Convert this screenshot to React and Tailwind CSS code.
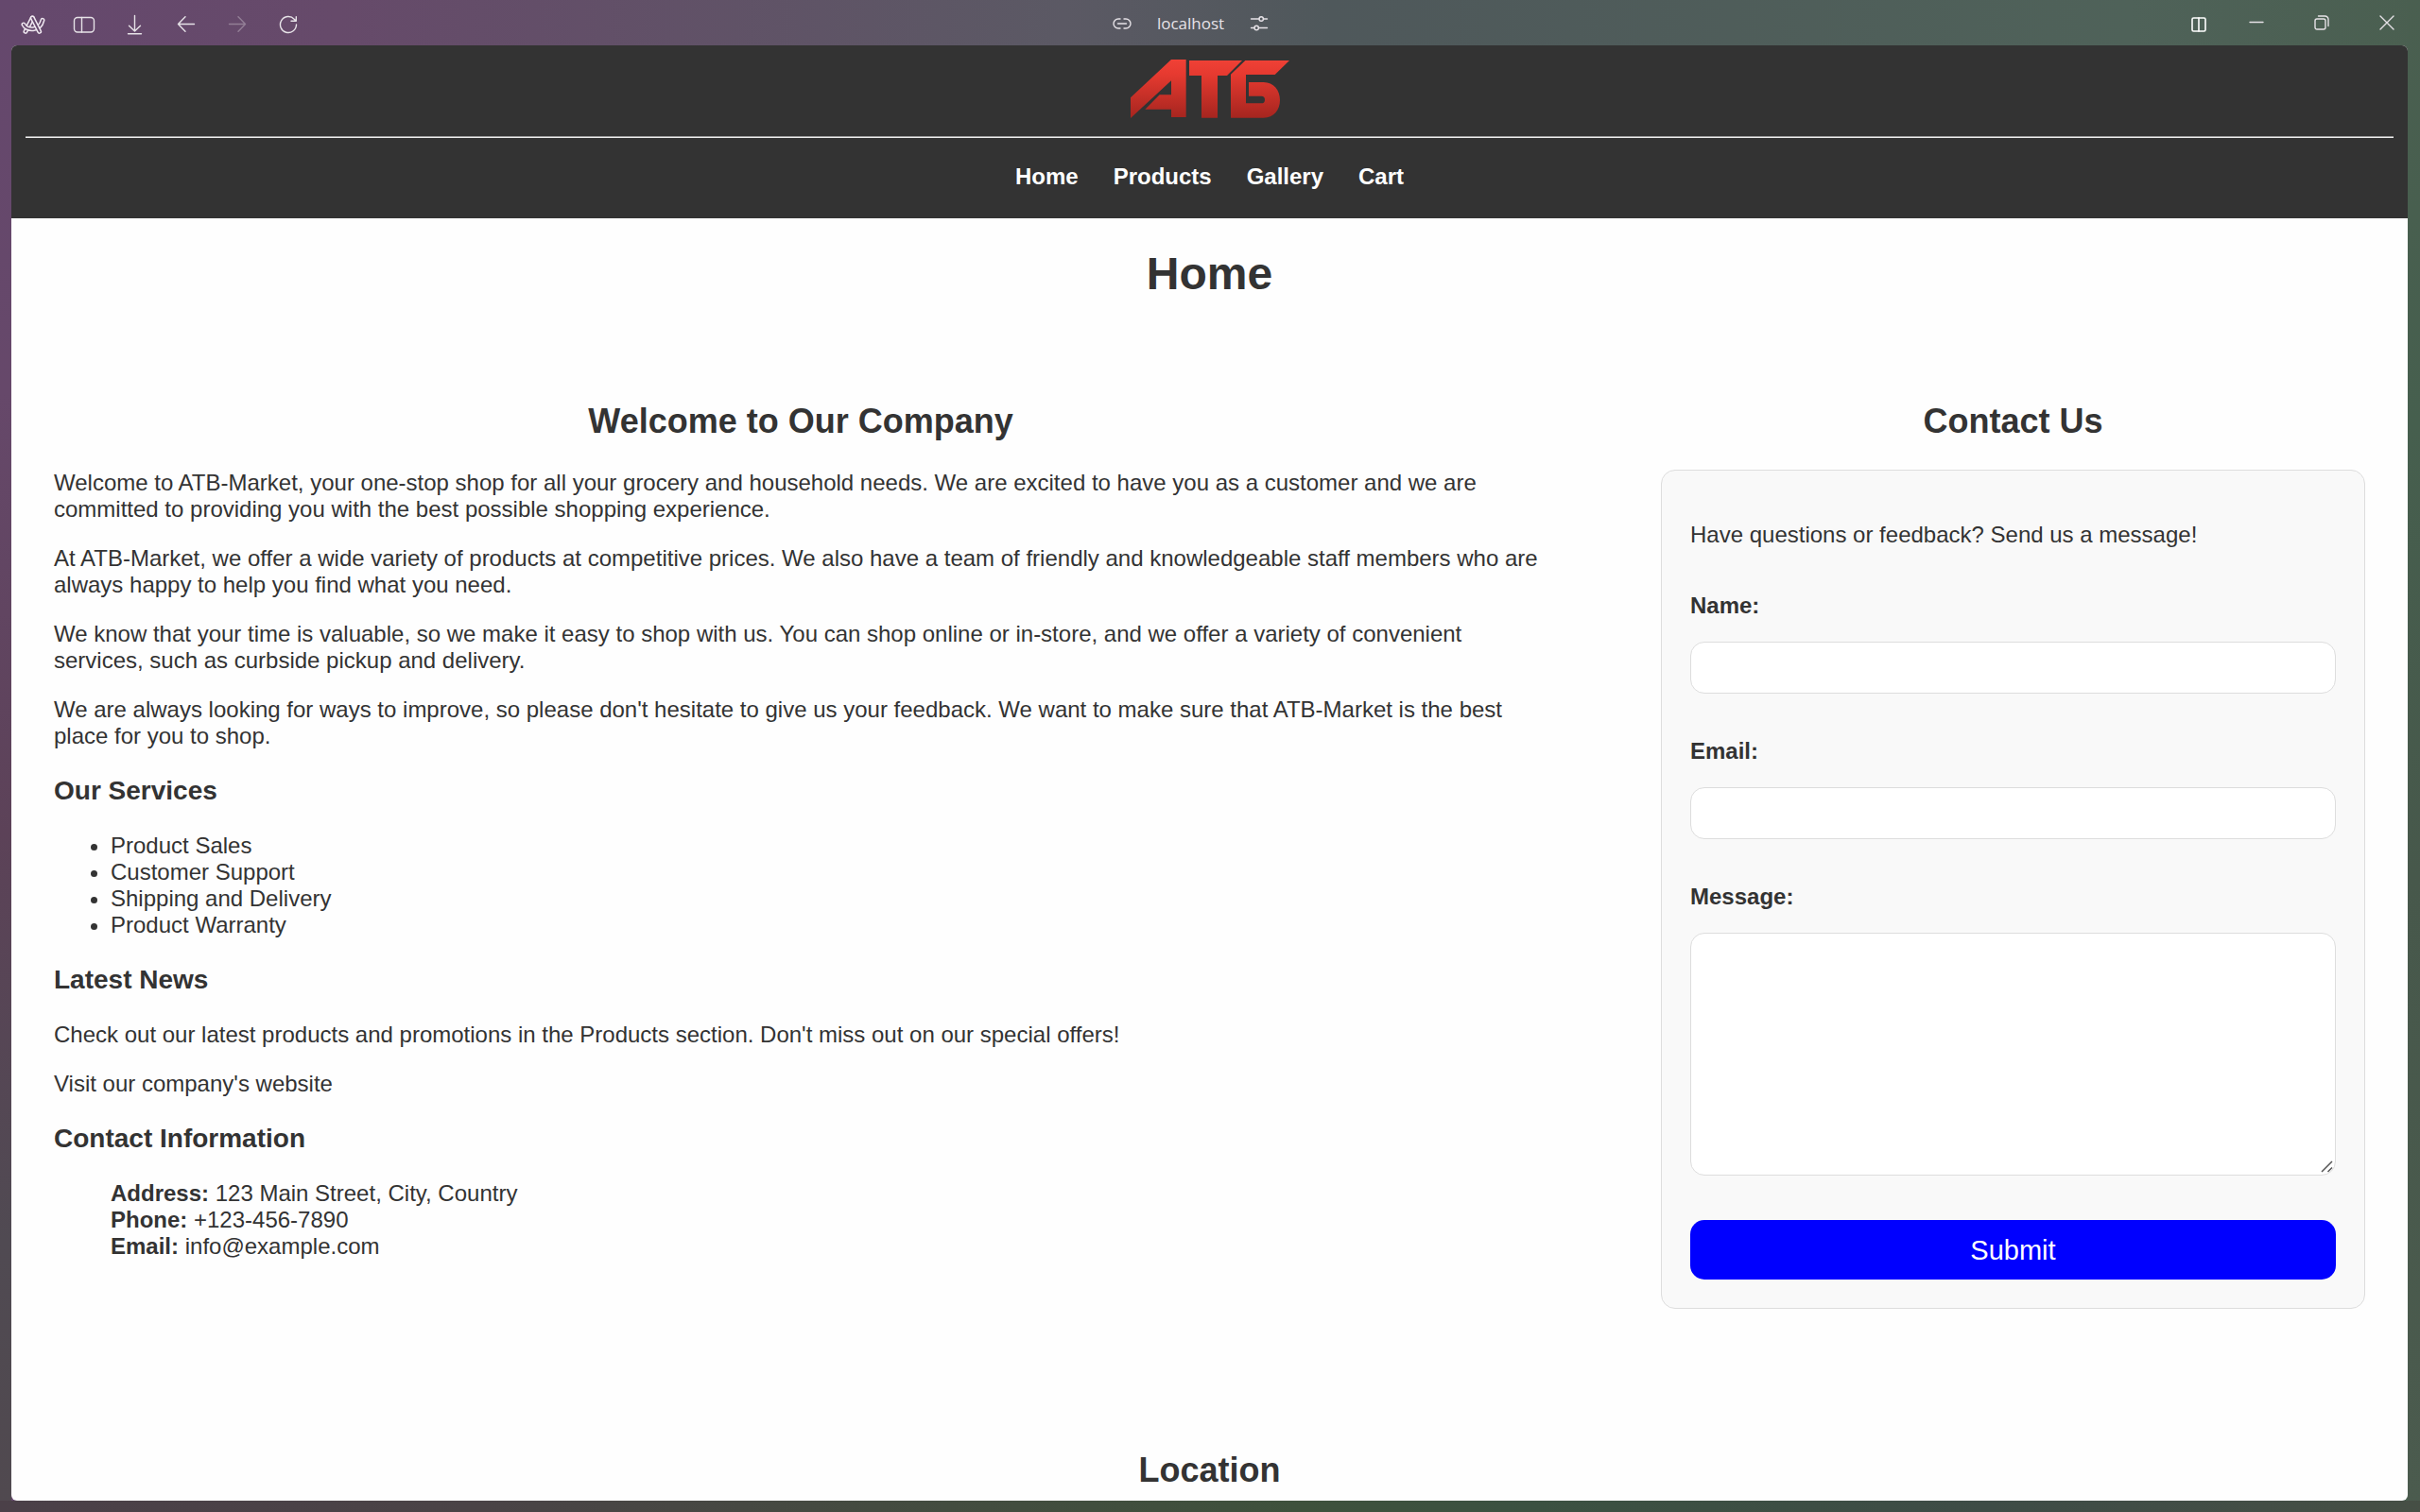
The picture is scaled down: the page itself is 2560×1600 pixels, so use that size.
const navLinks = ["Home", "Products", "Gallery", "Cart"];

const paragraphs = [
  "Welcome to ATB-Market, your one-stop shop for all your grocery and household needs. We are excited to have you as a customer and we are committed to providing you with the best possible shopping experience.",
  "At ATB-Market, we offer a wide variety of products at competitive prices. We also have a team of friendly and knowledgeable staff members who are always happy to help you find what you need.",
  "We know that your time is valuable, so we make it easy to shop with us. You can shop online or in-store, and we offer a variety of convenient services, such as curbside pickup and delivery.",
  "We are always looking for ways to improve, so please don't hesitate to give us your feedback. We want to make sure that ATB-Market is the best place for you to shop.",
];

const services = ["Product Sales", "Customer Support", "Shipping and Delivery", "Product Warranty"];

const contacts = [
  ["Address:", "123 Main Street, City, Country"],
  ["Phone:", "+123-456-7890"],
  ["Email:", "info@example.com"],
];

function Icon({ w, h, children, sw = 1.4, className = "" }) {
  return (
    <svg
      width={w}
      height={h}
      viewBox={`0 0 ${w} ${h}`}
      fill="none"
      stroke="currentColor"
      strokeWidth={sw}
      strokeLinecap="round"
      strokeLinejoin="round"
      aria-hidden="true"
      className={className}
    >
      {children}
    </svg>
  );
}

function ArcLogo() {
  const bands = ["M103 54L81 97", "M75 75C84 94 126 98 135 61", "M103 54L125 97"];
  return (
    <svg width="26" height="22" viewBox="66 42 78 66" fill="none" strokeLinecap="round" strokeLinejoin="round" aria-hidden="true">
      {bands.map((d) => (
        <g key={d}>
          <path d={d} stroke="#efe8f0" strokeWidth="15" />
          <path d={d} stroke="#66496d" strokeWidth="6" />
        </g>
      ))}
    </svg>
  );
}

function ToolButton({ label, children, className = "" }) {
  return (
    <button type="button" aria-label={label} className={`flex h-6 w-[54px] items-center justify-center ${className}`}>
      {children}
    </button>
  );
}

function WindowButton({ label, children, className = "w-[69px]" }) {
  return (
    <button type="button" aria-label={label} className={`flex h-6 items-center justify-center ${className}`}>
      {children}
    </button>
  );
}

function BrowserBar() {
  return (
    <div className="grid h-12 shrink-0 grid-cols-[1fr_auto_1fr] items-center text-[#e6e2e7]">
      <div className="flex items-center pt-[3px] pl-2">
        <ToolButton label="Arc menu">
          <ArcLogo />
        </ToolButton>
        <ToolButton label="Toggle sidebar">
          <Icon w={24} h={19}>
            <rect x="1.500" y="2.500" width="21" height="15.500" rx="3.500" />
            <path d="M9.500 2.500V18" />
          </Icon>
        </ToolButton>
        <ToolButton label="Downloads">
          <Icon w={18} h={22}>
            <path d="M8.500 1.500V18M2.500 12.200L8.500 18L14.500 12.200M1.500 20.800H15.500" />
          </Icon>
        </ToolButton>
        <ToolButton label="Back">
          <Icon w={20} h={18}>
            <path d="M1.500 8.500H18.500M9 0.700L1.500 8.500L9 16.300" />
          </Icon>
        </ToolButton>
        <ToolButton label="Forward" className="opacity-35">
          <Icon w={20} h={18}>
            <path d="M1.500 8.500H18.500M11 0.700L18.500 8.500L11 16.300" />
          </Icon>
        </ToolButton>
        <ToolButton label="Reload">
          <Icon w={20} h={20}>
            <path d="M18.500 10A8.500 8.500 0 1 1 16.200 4.200L18 6M18.300 1.800V6.300H13" />
          </Icon>
        </ToolButton>
      </div>
      <div className="flex items-center gap-[27px] pt-px pr-[41px]">
        <Icon w={20} h={14}>
          <path d="M8 2H6A5 5 0 0 0 6 12H8M12 2H14A5 5 0 0 1 14 12H12M5.500 7H14.500" />
        </Icon>
        <span className="font-['Open_Sans',sans-serif] text-[17px] leading-6">localhost</span>
        <Icon w={20} h={18}>
          <path d="M1.500 4H10M14.500 4H18.500M1.500 13.500H5M9.500 13.500H18.500" />
          <circle cx="12.200" cy="4" r="2.200" />
          <circle cx="7.200" cy="13.500" r="2.200" />
        </Icon>
      </div>
      <div className="flex items-center justify-end pr-px">
        <WindowButton label="Split view" className="w-[52px] pt-1">
          <Icon w={18} h={18} sw={1.6} className="text-white">
            <rect x="2" y="2" width="14" height="14" rx="1.500" />
            <path d="M9 2V16" />
          </Icon>
        </WindowButton>
        <WindowButton label="Minimize">
          <Icon w={16} h={16}>
            <path d="M1 7.500H15" />
          </Icon>
        </WindowButton>
        <WindowButton label="Restore">
          <Icon w={16} h={16}>
            <rect x="1" y="4" width="11" height="11" rx="2" />
            <path d="M4.500 1H11.500A3.500 3.500 0 0 1 15 4.500V11.500" />
          </Icon>
        </WindowButton>
        <WindowButton label="Close">
          <Icon w={16} h={16}>
            <path d="M1 1L15 15M15 1L1 15" />
          </Icon>
        </WindowButton>
      </div>
    </div>
  );
}

function StoreLogo() {
  return (
    <svg width="168" height="62" viewBox="0 0 504 186" role="img" aria-label="АТБ">
      <defs>
        <linearGradient id="logo-red" gradientUnits="userSpaceOnUse" x1="0" y1="0" x2="0" y2="186">
          <stop offset="0" stopColor="#f04136" />
          <stop offset="0.25" stopColor="#e63a30" />
          <stop offset="1" stopColor="#a5251f" />
        </linearGradient>
      </defs>
      <g fill="url(#logo-red)">
        <path d="M0 121L129 0H176V183H129V158H46L92 112H129V67L0 186Z" />
        <path d="M186 3H354L306 51H276V185H225V51H186Z" />
        <path d="M364 3H504L458 48H366V139H415A11 11 0 0 0 426 128A11 11 0 0 0 415 116H375V72H422C454 72 474 97 474 128C474 160 454 185 422 185H318V47Z" />
      </g>
    </svg>
  );
}

function Heading2({ children }) {
  return <h2 className="mt-[30px] mb-[31px] text-center text-[36px] leading-[41px] font-bold">{children}</h2>;
}

function Heading3({ children }) {
  return <h3 className="my-7 text-[28px] leading-8 font-bold">{children}</h3>;
}

function Field({ id, label, children }) {
  return (
    <div className="flex flex-col gap-6">
      <label htmlFor={id} className="font-bold">
        {label}
      </label>
      {children}
    </div>
  );
}

function ContactForm() {
  return (
    <form
      onSubmit={(e) => e.preventDefault()}
      className="flex flex-col gap-[47px] rounded-[15px] border border-[#ddd] bg-[#f9f9f9] p-[30px]"
    >
      <p className="mt-6">Have questions or feedback? Send us a message!</p>
      <Field id="name" label="Name:">
        <input id="name" type="text" className="h-[55px] rounded-[15px] border border-[#ddd] bg-white px-4" />
      </Field>
      <Field id="email" label="Email:">
        <input id="email" type="email" className="h-[55px] rounded-[15px] border border-[#ddd] bg-white px-4" />
      </Field>
      <Field id="message" label="Message:">
        <div className="relative flex">
          <textarea
            id="message"
            className="h-[257px] w-full resize-none rounded-[15px] border border-[#ddd] bg-white p-4"
          />
          <svg
            width="13"
            height="13"
            viewBox="0 0 13 13"
            stroke="#555"
            strokeWidth="1.500"
            aria-hidden="true"
            className="pointer-events-none absolute right-[3px] bottom-[3px]"
          >
            <path d="M1 12L12 1M7.500 12L12 7.500" />
          </svg>
        </div>
      </Field>
      <button type="submit" className="h-[63px] rounded-[15px] bg-[#0000ff] text-[29px] leading-9 text-white">
        Submit
      </button>
    </form>
  );
}

export default function App() {
  return (
    <div className="flex h-screen flex-col overflow-hidden [background:linear-gradient(to_right,#4b4048_0%,#4a4346_20%,#444b40_36%,#3e513c_54%,#3b5141_63%,#3e4c46_82%,#464f45_100%)_left_bottom/100%_12px_no-repeat,linear-gradient(to_bottom,#65486d_0%,#66486a_26%,#5c4258_55%,#504a52_82%,#50494f_100%)_left_top/12px_100%_no-repeat,linear-gradient(to_bottom,#4a5f50_0%,#465f4e_28%,#47584b_58%,#4b5b4e_100%)_right_top/13px_100%_no-repeat,linear-gradient(to_right,#65486d_0%,#664a6a_14%,#5b5964_44%,#4f585b_55%,#4f6259_88%,#4a5f50_100%)]">
      <BrowserBar />
      <div className="mr-[13px] mb-3 ml-3 flex-1 overflow-hidden rounded-md bg-[#fefefe] font-['Liberation_Sans',Arial,sans-serif] text-2xl leading-7 text-[#333]">
        <header className="flex flex-col items-center bg-[#333] px-[15px] pt-[15px] pb-[30px]">
          <StoreLogo />
          <hr className="mt-[19px] h-0 w-full border-t border-b border-t-[#9a9a9a] border-b-[#eee]" />
          <nav className="mt-[27px] flex gap-[37px] font-bold text-white">
            {navLinks.map((name) => (
              <a key={name} href={`#${name.toLowerCase()}`}>
                {name}
              </a>
            ))}
          </nav>
        </header>
        <main>
          <h1 className="mt-[31px] mb-[33px] text-center text-5xl leading-[55px] font-bold">Home</h1>
          <div className="grid grid-cols-[2fr_1fr] gap-[30px]">
            <section className="p-[45px]">
              <Heading2>Welcome to Our Company</Heading2>
              <div className="flex flex-col gap-6">
                {paragraphs.map((text) => (
                  <p key={text}>{text}</p>
                ))}
              </div>
              <Heading3>Our Services</Heading3>
              <ul className="list-disc pl-[60px]">
                {services.map((s) => (
                  <li key={s}>{s}</li>
                ))}
              </ul>
              <Heading3>Latest News</Heading3>
              <div className="flex flex-col gap-6">
                <p>Check out our latest products and promotions in the Products section. Don't miss out on our special offers!</p>
                <p>
                  <a href="#website">Visit our company's website</a>
                </p>
              </div>
              <Heading3>Contact Information</Heading3>
              <ul className="pl-[60px]">
                {contacts.map(([label, value]) => (
                  <li key={label}>
                    <strong>{label}</strong> {value}
                  </li>
                ))}
              </ul>
            </section>
            <section className="p-[45px]">
              <Heading2>Contact Us</Heading2>
              <ContactForm />
            </section>
            <section className="col-span-2 p-[45px]">
              <Heading2>Location</Heading2>
            </section>
          </div>
        </main>
      </div>
    </div>
  );
}
